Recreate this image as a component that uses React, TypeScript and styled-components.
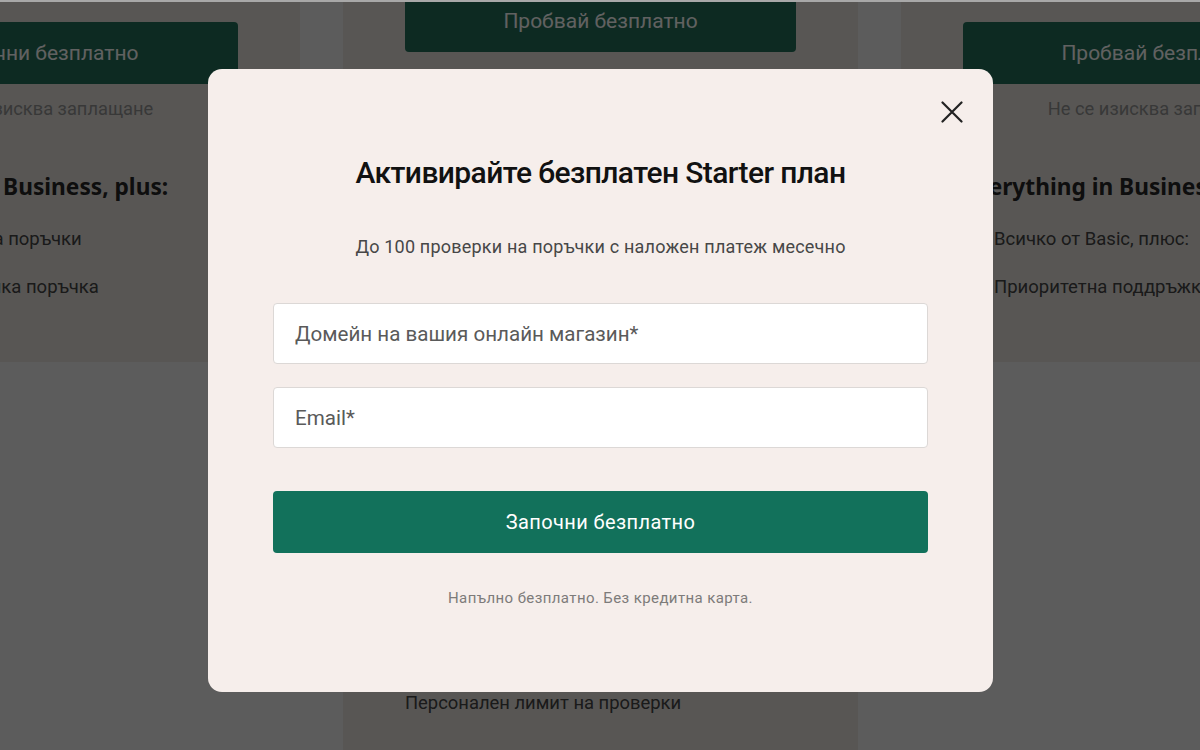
import React from "react";
import styled, { createGlobalStyle } from "styled-components";

const GlobalStyle = createGlobalStyle`
  html, body {
    margin: 0;
    padding: 0;
    background: #f2f2f2;
    overflow: hidden;
  }
  * { box-sizing: border-box; }
`;

const Page = styled.div`
  position: relative;
  width: 1200px;
  height: 750px;
  overflow: hidden;
  background: #f2f2f2;
  border-top: 2px solid #a8a8a8;
  font-family: Roboto, "Noto Sans", Arial, sans-serif;
`;

const PlansRow = styled.div`
  display: flex;
  align-items: flex-start;
  gap: 43px;
  margin-left: -215px;
`;

const PlanCard = styled.section<{ $featured?: boolean }>`
  flex: 0 0 515px;
  display: flex;
  flex-direction: column;
  padding: 20px 62px 0;
  background: #e6e3de;
  height: ${(p) => (p.$featured ? "790px" : "360px")};
  margin-top: ${(p) => (p.$featured ? "-32px" : "0")};
`;

const PlanButton = styled.div`
  height: 62px;
  border-radius: 4px;
  background: #226f59;
  color: #ffffff;
  font-size: 21px;
  display: flex;
  align-items: center;
  justify-content: center;
  flex-shrink: 0;
  white-space: nowrap;
`;

const PlanNote = styled.p`
  margin: 14px 0 0;
  text-align: center;
  font-size: 18.3px;
  line-height: 22px;
  color: #949494;
  white-space: nowrap;
`;

const PlanHeading = styled.h3`
  margin: 53px 0 0;
  font-family: "Noto Sans", "Open Sans", sans-serif;
  font-weight: 700;
  font-size: 22.7px;
  line-height: 28px;
  color: #262626;
  white-space: nowrap;
`;

const FeatureList = styled.ul`
  list-style: none;
  margin: 26px 0 0;
  padding: 0;
  display: flex;
  flex-direction: column;
  gap: 24px;
`;

const Feature = styled.li`
  display: flex;
  align-items: center;
  gap: 11px;
  font-size: 18.5px;
  line-height: 24px;
  color: #444444;
  white-space: nowrap;
`;

const PlainLine = styled.p`
  margin: 40px 0 0;
  font-size: 18.4px;
  line-height: 24px;
  color: #444444;
  white-space: nowrap;
`;

const Check = () => (
  <svg width="20" height="20" viewBox="0 0 20 20" fill="none">
    <path d="M4 10.5l4 4 8-9" stroke="#226f59" strokeWidth="2" strokeLinecap="round" strokeLinejoin="round" />
  </svg>
);

const Overlay = styled.div`
  position: absolute;
  inset: 0;
  background: rgba(0, 0, 0, 0.62);
  display: flex;
  justify-content: center;
  align-items: flex-start;
  padding-top: 67px;
  padding-left: 1px;
`;

const Modal = styled.div`
  position: relative;
  width: 785px;
  padding: 87px 65px 84px;
  background: #f6eeeb;
  border-radius: 14px;
  display: flex;
  flex-direction: column;
  align-items: stretch;
`;

const CloseButton = styled.button`
  position: absolute;
  top: 31px;
  right: 29px;
  width: 24px;
  height: 24px;
  padding: 0;
  border: none;
  background: transparent;
  display: flex;
  align-items: center;
  justify-content: center;
  cursor: pointer;
`;

const Title = styled.h2`
  margin: 0;
  text-align: center;
  font-family: Roboto, sans-serif;
  font-weight: 500;
  font-size: 30px;
  line-height: 34px;
  letter-spacing: -0.6px;
  color: #111111;
  white-space: nowrap;
`;

const Subtitle = styled.p`
  margin: 45px 0 0;
  text-align: center;
  font-size: 18px;
  line-height: 24px;
  letter-spacing: 0.2px;
  color: #474747;
  white-space: nowrap;
`;

const Field = styled.input<{ $first?: boolean }>`
  display: block;
  width: 100%;
  height: 61px;
  margin-top: ${(p) => (p.$first ? "44px" : "23px")};
  padding: 0 21px;
  border: 1px solid #dcd8d6;
  border-radius: 4px;
  background: #ffffff;
  font-family: Roboto, sans-serif;
  font-size: 20.6px;
  color: #222;
  outline: none;
  &::placeholder {
    color: #5a5a5a;
  }
`;

const SubmitButton = styled.button`
  margin-top: 43px;
  height: 62px;
  width: 100%;
  border: none;
  border-radius: 4px;
  background: #12715b;
  color: #ffffff;
  font-family: Roboto, sans-serif;
  font-size: 20px;
  letter-spacing: 0.4px;
  cursor: pointer;
`;

const FinePrint = styled.p`
  margin: 35px 0 0;
  text-align: center;
  font-size: 15px;
  line-height: 20px;
  letter-spacing: 0.4px;
  color: #7d7b7a;
  white-space: nowrap;
`;

const centralFeatures = [
  "Всичко от Starter, плюс:",
  "До 1000 проверки месечно",
  "Автоматична проверка на поръчки",
  "Проверка на всяка поръчка",
  "Интеграция с куриерски фирми",
  "Известия по имейл",
  "Подробни отчети",
  "Черен списък с клиенти",
  "Достъп до API",
  "Няколко потребители",
];

export default function App() {
  return (
    <>
      <GlobalStyle />
      <Page>
        <PlansRow>
          <PlanCard>
            <PlanButton>Започни безплатно</PlanButton>
            <PlanNote>Не се изисква заплащане</PlanNote>
            <PlanHeading>Everything in Business, plus:</PlanHeading>
            <FeatureList>
              <Feature><Check />Статистики на поръчки</Feature>
              <Feature><Check />Оценка за всяка поръчка</Feature>
            </FeatureList>
          </PlanCard>
          <PlanCard $featured>
            <PlanButton>Пробвай безплатно</PlanButton>
            <PlanNote>Не се изисква заплащане</PlanNote>
            <PlanHeading>Everything in Starter, plus:</PlanHeading>
            <FeatureList>
              {centralFeatures.map((f) => (
                <Feature key={f}><Check />{f}</Feature>
              ))}
            </FeatureList>
            <PlainLine>Персонален лимит на проверки</PlainLine>
          </PlanCard>
          <PlanCard>
            <PlanButton>Пробвай безплатно</PlanButton>
            <PlanNote>Не се изисква заплащане</PlanNote>
            <PlanHeading>Everything in Business, plus:</PlanHeading>
            <FeatureList>
              <Feature><Check />Всичко от Basic, плюс:</Feature>
              <Feature><Check />Приоритетна поддръжка</Feature>
            </FeatureList>
          </PlanCard>
        </PlansRow>

        <Overlay>
          <Modal role="dialog" aria-modal="true">
            <CloseButton aria-label="Затвори">
              <svg width="22" height="22" viewBox="0 0 22 22" fill="none">
                <path d="M1.5 1.5l19 19M20.5 1.5l-19 19" stroke="#222222" strokeWidth="2.2" strokeLinecap="round" />
              </svg>
            </CloseButton>
            <Title>Активирайте безплатен Starter план</Title>
            <Subtitle>До 100 проверки на поръчки с наложен платеж месечно</Subtitle>
            <Field $first placeholder="Домейн на вашия онлайн магазин*" />
            <Field type="email" placeholder="Email*" />
            <SubmitButton>Започни безплатно</SubmitButton>
            <FinePrint>Напълно безплатно. Без кредитна карта.</FinePrint>
          </Modal>
        </Overlay>
      </Page>
    </>
  );
}
